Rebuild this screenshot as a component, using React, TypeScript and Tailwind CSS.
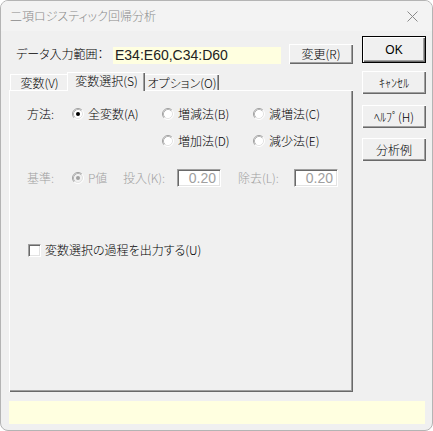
import React from 'react';

// Windows classic 3D bevels
const raised =
  'shadow-[inset_1px_1px_0_#ffffff,inset_-1px_-1px_0_#696969,inset_-2px_-2px_0_#a0a0a0]';
const sunken =
  'border border-t-[#a0a0a0] border-l-[#a0a0a0] border-r-white border-b-white shadow-[inset_1px_1px_0_#696969,inset_-1px_-1px_0_#e3e3e3]';

function Radio({ checked, disabled }: { checked?: boolean; disabled?: boolean }) {
  return (
    <svg width="12" height="12" viewBox="0 0 12 12" className="shrink-0">
      <circle cx="6" cy="6" r="5" fill={disabled ? '#f0f0f0' : '#ffffff'} />
      <path d="M2.11 9.89 A5.5 5.5 0 0 1 9.89 2.11" fill="none" stroke="#a0a0a0" />
      <path d="M9.89 2.11 A5.5 5.5 0 0 1 2.11 9.89" fill="none" stroke="#ffffff" />
      <path d="M2.82 9.18 A4.5 4.5 0 0 1 9.18 2.82" fill="none" stroke="#b5b5b5" />
      <path d="M9.18 2.82 A4.5 4.5 0 0 1 2.82 9.18" fill="none" stroke="#e3e3e3" />
      {checked && <circle cx="6" cy="6" r="2" fill={disabled ? '#a0a0a0' : '#000000'} />}
    </svg>
  );
}

function RadioItem({
  label,
  checked,
  className = '',
}: {
  label: string;
  checked?: boolean;
  className?: string;
}) {
  return (
    <div className={`flex items-center gap-[4px] ${className}`}>
      <Radio checked={checked} />
      <span>{label}</span>
    </div>
  );
}

function Btn({
  children,
  isDefault,
  className = '',
}: {
  children: React.ReactNode;
  isDefault?: boolean;
  className?: string;
}) {
  return (
    <div
      className={`flex items-center justify-center bg-[#f0f0f0] text-black ${
        isDefault ? 'border border-black' : ''
      } ${raised} ${className}`}
    >
      {children}
    </div>
  );
}

function NumBox({ value }: { value: string }) {
  return (
    <div
      className={`w-[44px] h-[18px] bg-white ${sunken} flex items-center justify-end pr-[4px] font-['Liberation_Sans',sans-serif] text-[14px] text-[#a0a0a0]`}
    >
      {value}
    </div>
  );
}

export default function App() {
  return (
    <div className="w-[433px] h-[431px] bg-white">
      <div className="w-[433px] h-[431px] flex flex-col rounded-[8px] border border-[#b4b4b4] bg-[#f0f0f0] overflow-hidden font-['Noto_Sans_CJK_JP',sans-serif] font-light [font-feature-settings:'palt'] text-[12px] leading-none text-black">
        {/* タイトルバー */}
        <div className="h-[30px] shrink-0 flex items-center justify-between bg-[#f3f3f3] pl-[9px] pr-[14px]">
          <span className="text-[12px] text-[#8a8a8a]">二項ロジスティック回帰分析</span>
          <svg width="11" height="11" viewBox="0 0 11 11">
            <path d="M0.5 0.5 L10.5 10.5 M10.5 0.5 L0.5 10.5" stroke="#8a8a8a" strokeWidth="1" />
          </svg>
        </div>

        <div className="flex">
          {/* 左側 */}
          <div className="ml-[8px] w-[344px] flex flex-col">
            <div className="mt-[12px] h-[21px] flex items-center">
              <span className="ml-[7px] w-[97px] text-[12px]">データ入力範囲：</span>
              <div className="w-[168px] h-[17px] mt-[3px] bg-[#ffffe0] flex items-center pl-[2px] font-['Liberation_Sans',sans-serif] text-[14px] text-[#222]">
                E34:E60,C34:D60
              </div>
              <Btn className="ml-[8px] w-[64px] h-[20px]">変更(R)</Btn>
            </div>

            {/* タブ */}
            <div className="h-[26px] flex items-end">
              <div className="ml-[1px] w-[58px] h-[16px] border-t border-l border-white shadow-[inset_-1px_0_0_#a0a0a0] flex items-center justify-center">
                変数(V)
              </div>
              <div className="relative z-10 -ml-[1px] -mb-[1px] w-[78px] h-[19px] bg-[#f0f0f0] border-t border-l border-white shadow-[inset_-1px_0_0_#696969,inset_-2px_0_0_#a0a0a0] flex items-center justify-center pb-[2px]">
                変数選択(S)
              </div>
              <div className="w-[74px] h-[16px] border-t border-white shadow-[inset_-1px_0_0_#696969,inset_-2px_0_0_#a0a0a0] flex items-center justify-center">
                オプション(O)
              </div>
            </div>

            <div className="h-[302px] border-l border-t border-white shadow-[inset_-1px_-1px_0_#696969,inset_-2px_-2px_0_#a0a0a0] pl-[17px]">
              <div className="mt-[15px] h-[16px] flex items-center">
                <span className="w-[45px]">方法:</span>
                <RadioItem className="w-[90px]" label="全変数(A)" checked />
                <RadioItem className="w-[91px]" label="増減法(B)" />
                <RadioItem label="減増法(C)" />
              </div>
              <div className="mt-[11px] h-[16px] flex items-center">
                <span className="w-[135px]" />
                <RadioItem className="w-[91px]" label="増加法(D)" />
                <RadioItem label="減少法(E)" />
              </div>
              <div className="mt-[20px] h-[18px] flex items-center text-[#a0a0a0]">
                <span className="w-[45px]">基準:</span>
                <div className="w-[51px] flex items-center gap-[4px]">
                  <Radio checked disabled />
                  <span>P値</span>
                </div>
                <span className="w-[54px]">投入(K):</span>
                <NumBox value="0.20" />
                <span className="ml-[17px] w-[56px]">除去(L):</span>
                <NumBox value="0.20" />
              </div>
              <div className="mt-[55px] h-[16px] flex items-center gap-[4px]">
                <div className={`ml-[1px] w-[13px] h-[13px] bg-white ${sunken}`} />
                <span>変数選択の過程を出力する(U)</span>
              </div>
            </div>
          </div>

          {/* 右側ボタン */}
          <div className="ml-[9px] w-[64px] flex flex-col">
            <Btn isDefault className="mt-[5px] h-[27px] font-['Liberation_Sans',sans-serif] text-[12px]">
              OK
            </Btn>
            <Btn className="mt-[8px] h-[23px]">ｷｬﾝｾﾙ</Btn>
            <Btn className="mt-[11px] h-[23px]">ﾍﾙﾌﾟ(H)</Btn>
            <Btn className="mt-[10px] h-[23px]">分析例</Btn>
          </div>
        </div>

        <div className="ml-[8px] mt-[9px] w-[416px] h-[23px] bg-[#ffffe0]" />
      </div>
    </div>
  );
}
